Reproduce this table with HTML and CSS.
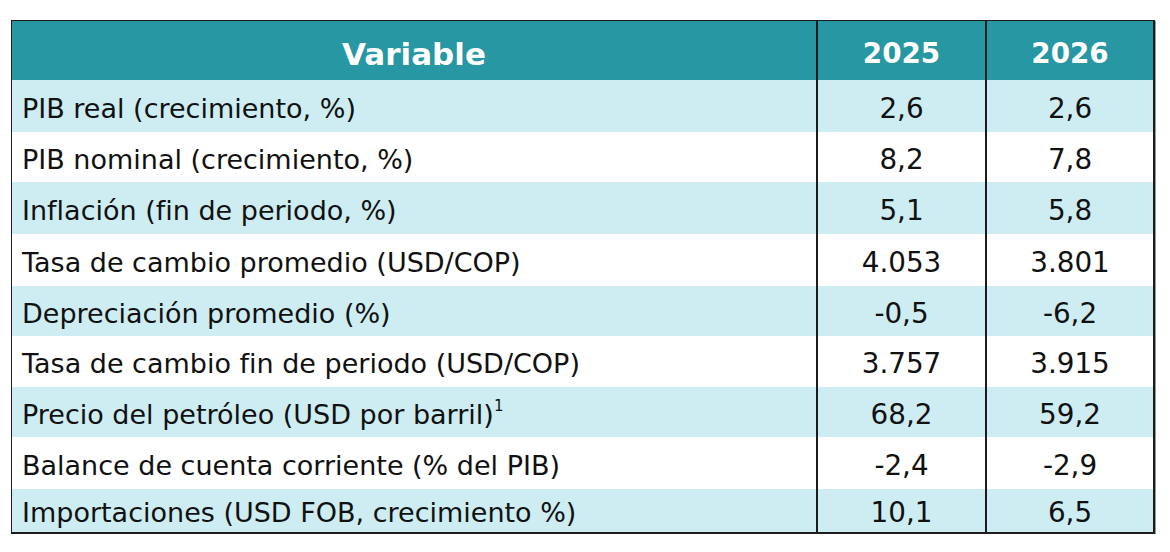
FILE: index.html
```html
<!DOCTYPE html>
<html lang="es">
<head>
<meta charset="utf-8">
<link rel="stylesheet" href="styles.css">
</head>
<body>
<div class="table">
  <div class="cell head var">Variable</div>
  <div class="cell head num">2025</div>
  <div class="cell head num">2026</div>

  <div class="cell label alt">PIB real (crecimiento, %)</div>
  <div class="cell num alt">2,6</div>
  <div class="cell num alt">2,6</div>

  <div class="cell label">PIB nominal (crecimiento, %)</div>
  <div class="cell num">8,2</div>
  <div class="cell num">7,8</div>

  <div class="cell label alt">Inflación (fin de periodo, %)</div>
  <div class="cell num alt">5,1</div>
  <div class="cell num alt">5,8</div>

  <div class="cell label">Tasa de cambio promedio (USD/COP)</div>
  <div class="cell num">4.053</div>
  <div class="cell num">3.801</div>

  <div class="cell label alt">Depreciación promedio (%)</div>
  <div class="cell num alt">-0,5</div>
  <div class="cell num alt">-6,2</div>

  <div class="cell label">Tasa de cambio fin de periodo (USD/COP)</div>
  <div class="cell num">3.757</div>
  <div class="cell num">3.915</div>

  <div class="cell label alt">Precio del petróleo (USD por barril)<sup class="sup">1</sup></div>
  <div class="cell num alt">68,2</div>
  <div class="cell num alt">59,2</div>

  <div class="cell label">Balance de cuenta corriente (% del PIB)</div>
  <div class="cell num">-2,4</div>
  <div class="cell num">-2,9</div>

  <div class="cell label alt">Importaciones (USD FOB, crecimiento %)</div>
  <div class="cell num alt">10,1</div>
  <div class="cell num alt">6,5</div>
</div>
</body>
</html>
```

FILE: styles.css
```css
html, body {
  margin: 0;
  padding: 0;
  background: #ffffff;
}

body {
  padding: 20px 0 0 11px;
  font-family: "DejaVu Sans", Verdana, sans-serif;
  color: #111111;
}

.table {
  display: grid;
  grid-template-columns: 804px 169px 168px;
  grid-template-rows: 59px 52px 50px 52px 52px 50px 51px 50px 52px 43px;
  width: 1141px;
  height: 511px;
  border: 2px solid #1c1c1c;
  border-left-width: 1.5px;
  border-top-width: 1.5px;
  box-shadow: 1px 1px 0 #9a9a9a;
  background: #ffffff;
}

.cell {
  display: flex;
  align-items: center;
  padding-top: 4px;
  box-sizing: border-box;
  font-size: 27px;
  white-space: nowrap;
}

.cell.num {
  justify-content: center;
  border-left: 2px solid #1c1c1c;
  font-size: 27.8px;
}

.cell.label {
  padding-left: 10px;
}

.alt {
  background: #cdedf2;
}

.head {
  background: #2697a3;
  color: #ffffff;
  font-weight: bold;
  padding-top: 6px;
}

.head.var {
  justify-content: center;
  font-size: 31px;
}

.head.num {
  font-size: 27.8px;
}

.sup {
  font-size: 15px;
  align-self: flex-start;
  margin-top: 6px;
  margin-left: 0;
}
```
